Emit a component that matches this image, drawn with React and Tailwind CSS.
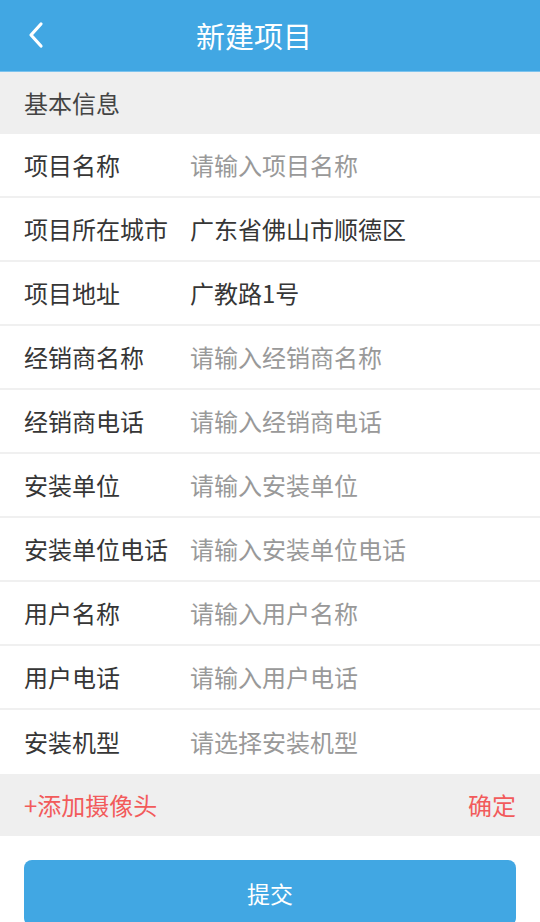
import { useState } from 'react';

const fields = [
  { label: '项目名称', placeholder: '请输入项目名称' },
  { label: '项目所在城市', value: '广东省佛山市顺德区' },
  { label: '项目地址', value: '广教路1号' },
  { label: '经销商名称', placeholder: '请输入经销商名称' },
  { label: '经销商电话', placeholder: '请输入经销商电话' },
  { label: '安装单位', placeholder: '请输入安装单位' },
  { label: '安装单位电话', placeholder: '请输入安装单位电话' },
  { label: '用户名称', placeholder: '请输入用户名称' },
  { label: '用户电话', placeholder: '请输入用户电话' },
  { label: '安装机型', placeholder: '请选择安装机型' },
];

export default function App() {
  const [values, setValues] = useState(() =>
    Object.fromEntries(fields.map((f) => [f.label, f.value || '']))
  );

  return (
    <div
      className="w-[540px] h-[922px] overflow-hidden bg-white"
      style={{ fontFamily: '"Noto Sans CJK SC", "Noto Sans", sans-serif' }}
    >
      {/* Header */}
      <div className="relative h-[72px] bg-[#41a7e3] border-b border-[#7cc3ee] flex items-center justify-center pr-[32px]">
        <button className="absolute left-[22px] top-[18px] w-[28px] h-[34px] flex items-center justify-center">
          <svg width="20" height="28" viewBox="0 0 20 28" fill="none">
            <path d="M15 3 L5 14 L15 25" stroke="white" strokeWidth="3.2" strokeLinecap="round" strokeLinejoin="round" />
          </svg>
        </button>
        <h1 className="text-[29px] leading-none text-white font-normal">新建项目</h1>
      </div>

      {/* Section title */}
      <div className="h-[62px] bg-[#efefef] flex items-center px-6 text-[24px] text-[#444]">
        基本信息
      </div>

      {/* Form rows */}
      <div>
        {fields.map((f, i) => (
          <div
            key={f.label}
            className={`h-[64px] flex items-center pl-6 pr-6 ${
              i < fields.length - 1 ? 'border-b-2 border-[#f0f0f0]' : ''
            }`}
          >
            <span className="w-[166px] shrink-0 text-[24px] text-[#363636]">{f.label}</span>
            <input
              type="text"
              value={values[f.label]}
              placeholder={f.placeholder}
              onChange={(e) => setValues({ ...values, [f.label]: e.target.value })}
              className="flex-1 min-w-0 bg-transparent outline-none text-[24px] text-[#363636] placeholder:text-[#999]"
            />
          </div>
        ))}
      </div>

      {/* Camera bar */}
      <div className="h-[62px] bg-[#efefef] flex items-center justify-between px-6 text-[24px] text-[#f25b5b]">
        <span>+添加摄像头</span>
        <span>确定</span>
      </div>

      {/* Submit */}
      <div className="px-6 pt-6">
        <button className="w-full h-[66px] rounded-[8px] bg-[#41a7e3] text-white text-[23px] flex items-center justify-center">
          提交
        </button>
      </div>
    </div>
  );
}
